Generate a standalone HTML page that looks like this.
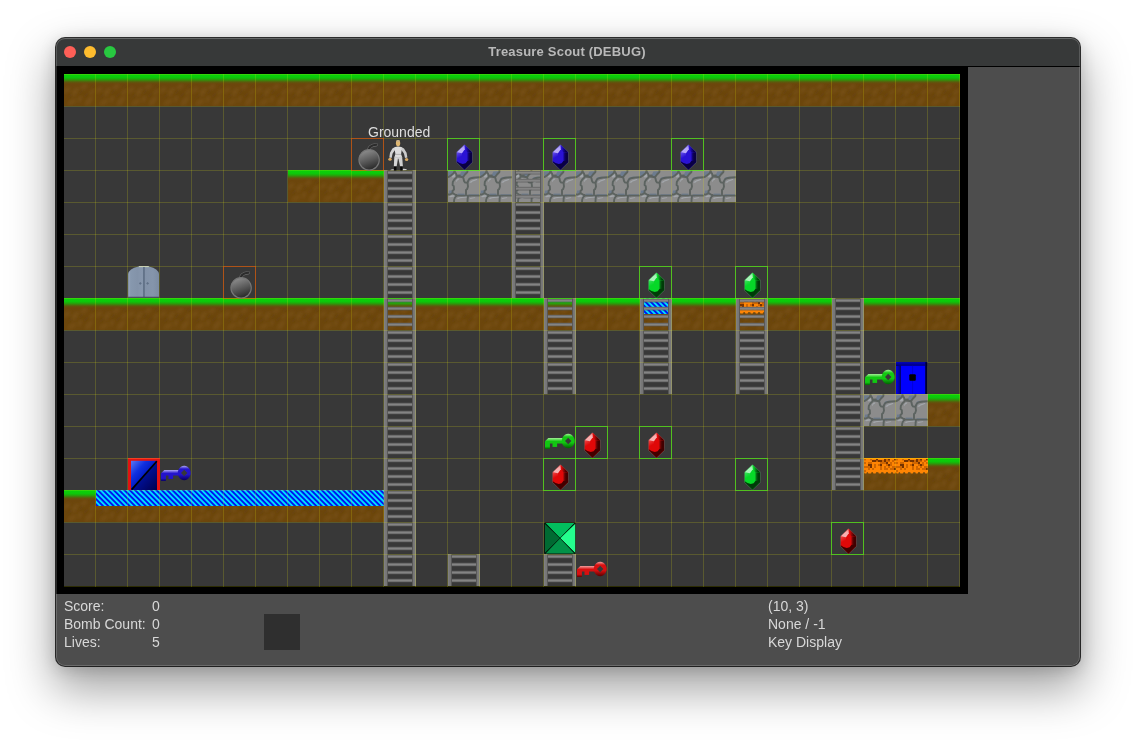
<!DOCTYPE html>
<html lang="en"><head><meta charset="utf-8"><title>Treasure Scout (DEBUG)</title>
<style>
html,body{margin:0;padding:0;}
body{width:1136px;height:740px;background:#fff;position:relative;overflow:hidden;font-family:"DejaVu Sans","Liberation Sans",sans-serif;}
#win{position:absolute;left:56px;top:38px;width:1024px;height:628px;border-radius:9px;background:#4d4d4d;
 box-shadow:0 0 0 1px rgba(0,0,0,.8),0 21px 46px 3px rgba(0,0,0,.36),0 3px 16px rgba(0,0,0,.17);overflow:hidden;}
#win:after{content:'';position:absolute;left:0;top:0;right:0;bottom:0;border-radius:9px;box-shadow:inset 0 0 0 1px rgba(255,255,255,.17),inset 0 1px 0 rgba(255,255,255,.09);pointer-events:none;}
#tb{position:absolute;left:0;top:0;width:1024px;height:28px;background:#373939;border-bottom:1px solid #000;}
#tb .t{position:absolute;left:0;right:2px;top:6px;text-align:center;font:bold 13px "Liberation Sans",sans-serif;color:#b9b9b9;letter-spacing:0.2px;will-change:transform;}
.tl{position:absolute;top:8px;width:12px;height:12px;border-radius:50%;}
#game{position:absolute;left:0;top:28px;width:912px;height:528px;background:#000;}
#game svg{position:absolute;left:0;top:0;}
.hud{position:absolute;color:#d8d8d8;font:14px/18px "Liberation Sans",sans-serif;white-space:pre;will-change:transform;}
#grounded{position:absolute;left:312px;top:57px;color:#dedede;font:14px/18px "Liberation Sans",sans-serif;will-change:transform;}
</style></head><body>
<div id="win">
 <div id="tb">
  <div class="tl" style="left:8px;background:#fe5f57"></div>
  <div class="tl" style="left:28px;background:#febc2e"></div>
  <div class="tl" style="left:48px;background:#28c840"></div>
  <div class="t">Treasure Scout (DEBUG)</div>
 </div>
 <div id="game">
  <svg width="912" height="528" viewBox="0 0 912 528">
  <defs><pattern id="dirt" width="32" height="32" patternUnits="userSpaceOnUse">
<rect width="32" height="32" fill="#6c460c"/>
<g fill="#7e561a" opacity="0.48" filter="url(#b1)">
<ellipse cx="11" cy="18" rx="5.5" ry="2.4" transform="rotate(-50 11 18)"/>
<ellipse cx="25" cy="27" rx="5.5" ry="2.4" transform="rotate(-55 25 27)"/>
<ellipse cx="3" cy="16" rx="3.4" ry="2" transform="rotate(-40 3 16)"/>
<ellipse cx="20" cy="13" rx="4" ry="2" transform="rotate(-45 20 13)"/>
<ellipse cx="28" cy="18" rx="3.4" ry="1.8" transform="rotate(-60 28 18)"/>
<ellipse cx="8" cy="28" rx="4.5" ry="2" transform="rotate(-30 8 28)"/>
<ellipse cx="16" cy="25" rx="3.4" ry="1.7" transform="rotate(-60 16 25)"/>
</g>
<g fill="#643f09" opacity="0.5" filter="url(#b1)">
<ellipse cx="17" cy="18" rx="3" ry="1.7" transform="rotate(-50 17 18)"/>
<ellipse cx="6" cy="22" rx="3" ry="1.7" transform="rotate(-50 6 22)"/>
<ellipse cx="29" cy="12" rx="3" ry="1.7" transform="rotate(-50 29 12)"/>
<ellipse cx="22" cy="21" rx="3" ry="1.5" transform="rotate(-40 22 21)"/>
</g>
</pattern>
<filter id="b1" x="-50%" y="-50%" width="200%" height="200%"><feGaussianBlur stdDeviation="1.5"/></filter>
<linearGradient id="grass" x1="0" y1="0" x2="0" y2="1">
<stop offset="0" stop-color="#09d309"/>
<stop offset="0.26" stop-color="#0bcb0a"/>
<stop offset="0.40" stop-color="#1bb00b" stop-opacity="0.97"/>
<stop offset="0.54" stop-color="#38890c" stop-opacity="0.8"/>
<stop offset="0.68" stop-color="#56620d" stop-opacity="0.45"/>
<stop offset="0.84" stop-color="#6e470d" stop-opacity="0"/>
</linearGradient><pattern id="stone" width="32" height="32" patternUnits="userSpaceOnUse">
<rect width="32" height="32" fill="#8c8c8c"/>
<g filter="url(#b05)"><g fill="#6d7b8e">
<path d="M0,1.5 L4.8,1.2 L5,3.2 L3.5,4.6 L1.5,6 L0,6.4Z"/>
<path d="M13.5,1.4 L19,1.2 L19,2.6 L17,4.6 L15.2,6.4 L12,6.2 L11.8,4.5Z"/>
<path d="M19.6,11.6 L20,9 L21.5,7.3 L26.5,6.6 L26,7.6 L23.6,8.4 L21.6,10 L21,12Z"/>
<path d="M1.2,20.4 L4.2,20.4 L4.2,23.2 L0.6,23.6Z"/>
<path d="M9.5,23.6 L16.5,23.6 L16.5,25 L9.5,25Z"/>
<path d="M20.6,24.2 L31,24.2 L31,25 L23,25 L23,26.6 L20.6,26.6Z"/>
</g>
<g fill="#a3a7ac">
<path d="M3.8,6.8 L4.6,5.2 L5.9,4.1 L7.2,4.4 L7.6,6 L6.4,7.2 L4.6,7.6Z"/>
<path d="M7.8,11.4 L8.7,9.6 L10.2,8.5 L11.4,8.5 L11,9.6 L9.6,10.3 L8.6,11.8Z"/>
<path d="M21.3,12.8 L22.7,11.2 L24.6,10.2 L27,9.5 L29.2,8.8 L29.2,9.8 L27,10.8 L24.6,11.5 L23.2,12.8Z"/>
<path d="M1,26.8 L2.6,25.6 L5,25.2 L7.4,25.6 L7.2,26.8 L5,26.8 L2.6,27.3Z"/>
<path d="M8.9,28.8 L10.2,27.6 L13,27.1 L16.5,26.7 L17.3,25.5 L19,25.7 L19,27.4 L16,27.8 L12,28.2 L10.2,29Z"/>
<path d="M21.2,28.8 L22.6,28 L25,27.4 L27.2,27.2 L27,28 L24.5,28.6 L22.6,29.1Z"/>
</g>
<g fill="none" stroke="#5c6360" stroke-width="1.9" stroke-linejoin="round" stroke-linecap="round">
<path d="M0,7.2 L1.5,6.6 L3.5,5 L5.6,3.2 L6.5,1.5 L6.5,0"/>
<path d="M6.5,1.5 L8,3.5 L8.6,5.5 L10,6.6 L12,6.8 L15,7.2 L17,4.5 L19.4,2 L19.4,0"/>
<path d="M9,6 L11.5,5.8" stroke-width="2.6"/>
<path d="M9,6.5 L8,7.8 L6.3,9.5 L4.8,12 L4.6,15 L5.8,16.2 L6,19.5 L4.6,20.8 L4.6,23 L6.5,24.3 L8.5,25.2"/>
<path d="M15,7.2 L15.5,8.5 L16,11 L17,12.6 L19.5,12.6 L19.8,15 L20,16.5 L19.2,19 L18,20 L18,24.5"/>
<path d="M19.5,12.6 L20.3,10.5 L21.5,8.8 L24,8 L27.5,7.5 L32,7.2"/>
<path d="M0,24.5 L2,24.5 L4.6,23.2"/>
<path d="M8.5,25.6 L32,25.6"/>
<path d="M8.5,25.6 L7,27.5 L6.2,29.5 L6,32"/>
<path d="M20,26 L19.6,29 L19.5,32"/>
</g></g>
</pattern>
<filter id="b05" x="-5%" y="-5%" width="110%" height="110%"><feGaussianBlur stdDeviation="0.5"/></filter><pattern id="ladder" width="32" height="8" patternUnits="userSpaceOnUse" patternTransform="translate(0,0.8)">
<rect x="3.6" y="0" width="24.8" height="3.4" fill="#505050"/>
<rect x="3.6" y="0.45" width="24.8" height="2.5" fill="#7a7a7a"/>
<rect x="3.6" y="1.0" width="24.8" height="1.3" fill="#868686"/>
<rect x="0.2" y="0" width="3.6" height="8" fill="#767676"/>
<rect x="28.2" y="0" width="3.6" height="8" fill="#767676"/>
<rect x="0.2" y="0" width="0.9" height="8" fill="#868686"/>
<rect x="30.9" y="0" width="0.9" height="8" fill="#868686"/>
<rect x="3.1" y="0" width="0.7" height="8" fill="#4e4e4e"/>
<rect x="28.2" y="0" width="0.7" height="8" fill="#4e4e4e"/>
</pattern><pattern id="water" width="16" height="16" patternUnits="userSpaceOnUse">
<rect width="16" height="16" fill="#0014f0"/>
<path d="M-18.36,0 L-15.70,0 L0.30,16 L-2.36,16Z M-13.03,0 L-10.36,0 L5.64,16 L2.97,16Z M-7.70,0 L-5.03,0 L10.97,16 L8.30,16Z M-2.36,0 L0.30,0 L16.30,16 L13.64,16Z M2.97,0 L5.64,0 L21.64,16 L18.97,16Z M8.30,0 L10.97,0 L26.97,16 L24.30,16Z M13.64,0 L16.30,0 L32.30,16 L29.64,16Z M18.97,0 L21.64,0 L37.64,16 L34.97,16Z" fill="#00dcff"/>
</pattern><pattern id="lava" width="32" height="16" patternUnits="userSpaceOnUse">
<rect width="32" height="14.2" fill="#ff8503"/>
<rect width="32" height="1" fill="#ff9c00"/>
<g fill="#ff8503"><rect x="0.2" y="13.6" width="2.6" height="2" rx="0.8"/><rect x="4.0" y="13.6" width="3.4" height="2" rx="0.8"/><rect x="9.0" y="13.6" width="3.0" height="2" rx="0.8"/><rect x="14.4" y="13.6" width="2.8" height="2" rx="0.8"/><rect x="19.4" y="13.6" width="2.6" height="2" rx="0.8"/><rect x="24.0" y="13.6" width="3.2" height="2" rx="0.8"/><rect x="28.8" y="13.6" width="2.8" height="2" rx="0.8"/></g>
<g filter="url(#b05)"><g fill="#c45e00" opacity="0.8"><rect x="0" y="1.0" width="2" height="1.4"/><rect x="6" y="1.0" width="2" height="1.4"/><rect x="22" y="1.0" width="2" height="1.4"/><rect x="12" y="2.0" width="2" height="2.0"/><rect x="18" y="2.0" width="2" height="2.0"/><rect x="22" y="2.0" width="2" height="2.0"/><rect x="24" y="2.0" width="2" height="2.0"/><rect x="28" y="2.0" width="2" height="2.0"/><rect x="0" y="4.0" width="2" height="2.0"/><rect x="4" y="4.0" width="2" height="2.0"/><rect x="6" y="4.0" width="2" height="2.0"/><rect x="16" y="4.0" width="2" height="2.0"/><rect x="18" y="4.0" width="2" height="2.0"/><rect x="20" y="4.0" width="2" height="2.0"/><rect x="26" y="4.0" width="2" height="2.0"/><rect x="30" y="4.0" width="2" height="2.0"/><rect x="10" y="6.0" width="2" height="2.0"/><rect x="14" y="6.0" width="2" height="2.0"/><rect x="22" y="6.0" width="2" height="2.0"/><rect x="26" y="6.0" width="2" height="2.0"/><rect x="0" y="8.0" width="2" height="2.0"/><rect x="2" y="8.0" width="2" height="2.0"/><rect x="4" y="8.0" width="2" height="2.0"/><rect x="10" y="8.0" width="2" height="2.0"/><rect x="16" y="8.0" width="2" height="2.0"/><rect x="20" y="8.0" width="2" height="2.0"/><rect x="24" y="8.0" width="2" height="2.0"/><rect x="28" y="8.0" width="2" height="2.0"/><rect x="30" y="8.0" width="2" height="2.0"/><rect x="4" y="10.0" width="2" height="2.0"/><rect x="8" y="10.0" width="2" height="2.0"/><rect x="16" y="10.0" width="2" height="2.0"/><rect x="20" y="10.0" width="2" height="2.0"/><rect x="22" y="10.0" width="2" height="2.0"/><rect x="26" y="10.0" width="2" height="2.0"/><rect x="28" y="10.0" width="2" height="2.0"/><rect x="0" y="12.0" width="2" height="2.0"/></g>
<g fill="#5e2400" opacity="0.85"><rect x="12" y="1.0" width="2" height="1.4"/><rect x="20" y="1.0" width="2" height="1.4"/><rect x="24" y="1.0" width="2" height="1.4"/><rect x="30" y="1.0" width="2" height="1.4"/><rect x="8" y="2.0" width="2" height="2.0"/><rect x="10" y="2.0" width="2" height="2.0"/><rect x="14" y="2.0" width="2" height="2.0"/><rect x="16" y="2.0" width="2" height="2.0"/><rect x="20" y="2.0" width="2" height="2.0"/><rect x="22" y="4.0" width="2" height="2.0"/><rect x="4" y="6.0" width="2" height="2.0"/><rect x="6" y="6.0" width="2" height="2.0"/><rect x="16" y="6.0" width="2" height="2.0"/><rect x="24" y="6.0" width="2" height="2.0"/><rect x="6" y="8.0" width="2" height="2.0"/><rect x="30" y="10.0" width="2" height="2.0"/></g></g>
</pattern><linearGradient id="bombg" x1="0.3" y1="0.02" x2="0.65" y2="0.98">
<stop offset="0" stop-color="#8e8e8e"/><stop offset="0.5" stop-color="#5c5c5c"/><stop offset="1" stop-color="#272727"/></linearGradient>
<linearGradient id="doorg" x1="0" y1="0" x2="1" y2="0">
<stop offset="0" stop-color="#9cabc0"/><stop offset="0.08" stop-color="#8798ae"/><stop offset="0.3" stop-color="#8393a9"/>
<stop offset="0.45" stop-color="#8797ad"/><stop offset="0.55" stop-color="#8292a8"/><stop offset="0.8" stop-color="#8595ab"/><stop offset="1" stop-color="#7c8ca2"/></linearGradient>
<linearGradient id="lockL" x1="0" y1="0" x2="1" y2="0"><stop offset="0" stop-color="#0000ea"/><stop offset="0.07" stop-color="#0000b8"/><stop offset="0.15" stop-color="#000070"/><stop offset="1" stop-color="#000066"/></linearGradient>
<linearGradient id="lockT" x1="0" y1="0" x2="0" y2="1"><stop offset="0" stop-color="#0000c8"/><stop offset="1" stop-color="#00006c"/></linearGradient>
<linearGradient id="lockR" x1="0" y1="0" x2="1" y2="0"><stop offset="0" stop-color="#000070"/><stop offset="1" stop-color="#000010"/></linearGradient>
<linearGradient id="crateg" x1="0" y1="0" x2="1" y2="1"><stop offset="0" stop-color="#5a78f4"/><stop offset="0.3" stop-color="#1030e0"/><stop offset="0.55" stop-color="#0018c0"/><stop offset="1" stop-color="#000058"/></linearGradient><linearGradient id="glb" x1="0" y1="0" x2="0.25" y2="1"><stop offset="0" stop-color="#6a52ea"/><stop offset="0.55" stop-color="#2a12d4"/><stop offset="1" stop-color="#2a12d4"/></linearGradient><linearGradient id="gtb" x1="0.3" y1="0" x2="0.6" y2="1"><stop offset="0" stop-color="#6a52ea"/><stop offset="0.5" stop-color="#b6a8f8"/><stop offset="1" stop-color="#b6a8f8"/></linearGradient><linearGradient id="grb" gradientUnits="userSpaceOnUse" x1="17.6" y1="0" x2="22" y2="0"><stop offset="0" stop-color="#2a12d4"/><stop offset="0.4" stop-color="#16059a"/><stop offset="1" stop-color="#0a0044"/></linearGradient><linearGradient id="glg" x1="0" y1="0" x2="0.25" y2="1"><stop offset="0" stop-color="#3ee060"/><stop offset="0.55" stop-color="#06d828"/><stop offset="1" stop-color="#06d828"/></linearGradient><linearGradient id="gtg" x1="0.3" y1="0" x2="0.6" y2="1"><stop offset="0" stop-color="#3ee060"/><stop offset="0.5" stop-color="#a8f4b8"/><stop offset="1" stop-color="#a8f4b8"/></linearGradient><linearGradient id="grg" gradientUnits="userSpaceOnUse" x1="17.6" y1="0" x2="22" y2="0"><stop offset="0" stop-color="#06d828"/><stop offset="0.4" stop-color="#068c1a"/><stop offset="1" stop-color="#003c08"/></linearGradient><linearGradient id="glr" x1="0" y1="0" x2="0.25" y2="1"><stop offset="0" stop-color="#ee4848"/><stop offset="0.55" stop-color="#e00808"/><stop offset="1" stop-color="#e00808"/></linearGradient><linearGradient id="gtr" x1="0.3" y1="0" x2="0.6" y2="1"><stop offset="0" stop-color="#ee4848"/><stop offset="0.5" stop-color="#f8b0b0"/><stop offset="1" stop-color="#f8b0b0"/></linearGradient><linearGradient id="grr" gradientUnits="userSpaceOnUse" x1="17.6" y1="0" x2="22" y2="0"><stop offset="0" stop-color="#e00808"/><stop offset="0.4" stop-color="#960808"/><stop offset="1" stop-color="#420000"/></linearGradient><linearGradient id="kgg" x1="0" y1="0" x2="0" y2="1"><stop offset="0" stop-color="#a4f096"/><stop offset="0.22" stop-color="#12c812"/><stop offset="0.6" stop-color="#12c812"/><stop offset="1" stop-color="#006400"/></linearGradient><linearGradient id="ksg" x1="0" y1="0" x2="0" y2="1"><stop offset="0" stop-color="#a4f096"/><stop offset="0.3" stop-color="#12c812"/><stop offset="0.75" stop-color="#12c812"/><stop offset="1" stop-color="#006400"/></linearGradient><linearGradient id="kgb" x1="0" y1="0" x2="0" y2="1"><stop offset="0" stop-color="#b0a8f4"/><stop offset="0.22" stop-color="#2414cc"/><stop offset="0.6" stop-color="#2414cc"/><stop offset="1" stop-color="#08005a"/></linearGradient><linearGradient id="ksb" x1="0" y1="0" x2="0" y2="1"><stop offset="0" stop-color="#b0a8f4"/><stop offset="0.3" stop-color="#2414cc"/><stop offset="0.75" stop-color="#2414cc"/><stop offset="1" stop-color="#08005a"/></linearGradient><linearGradient id="kgr" x1="0" y1="0" x2="0" y2="1"><stop offset="0" stop-color="#f4a0a0"/><stop offset="0.22" stop-color="#d81010"/><stop offset="0.6" stop-color="#d81010"/><stop offset="1" stop-color="#5a0000"/></linearGradient><linearGradient id="ksr" x1="0" y1="0" x2="0" y2="1"><stop offset="0" stop-color="#f4a0a0"/><stop offset="0.3" stop-color="#d81010"/><stop offset="0.75" stop-color="#d81010"/><stop offset="1" stop-color="#5a0000"/></linearGradient></defs>
  <g transform="translate(8,8)"><rect x="0" y="0" width="896" height="512" fill="#383838"/><rect x="0" y="0" width="896" height="32" fill="url(#dirt)"/><rect x="0" y="0" width="896" height="12.6" fill="url(#grass)"/><rect x="224" y="96" width="96" height="32" fill="url(#dirt)"/><rect x="224" y="96" width="96" height="12.6" fill="url(#grass)"/><rect x="384" y="96" width="288" height="32" fill="url(#stone)"/><rect x="0" y="224" width="768" height="32" fill="url(#dirt)"/><rect x="0" y="224" width="768" height="12.6" fill="url(#grass)"/><rect x="800" y="224" width="96" height="32" fill="url(#dirt)"/><rect x="800" y="224" width="96" height="12.6" fill="url(#grass)"/><rect x="800" y="320" width="64" height="32" fill="url(#stone)"/><rect x="864" y="320" width="32" height="32" fill="url(#dirt)"/><rect x="864" y="320" width="32" height="12.6" fill="url(#grass)"/><rect x="800" y="384" width="64" height="32" fill="url(#dirt)"/><rect x="864" y="384" width="32" height="32" fill="url(#dirt)"/><rect x="864" y="384" width="32" height="12.6" fill="url(#grass)"/><rect x="0" y="416" width="32" height="32" fill="url(#dirt)"/><rect x="0" y="416" width="32" height="12.6" fill="url(#grass)"/><rect x="32" y="416" width="288" height="32" fill="url(#dirt)"/><rect x="576" y="224" width="32" height="16" fill="url(#water)"/><rect x="32" y="416" width="288" height="16" fill="url(#water)"/><rect x="672" y="224" width="32" height="16" fill="url(#lava)"/><rect x="800" y="384" width="64" height="16" fill="url(#lava)"/><rect x="320" y="96" width="32" height="416" fill="url(#ladder)"/><rect x="448" y="96" width="32" height="128" fill="url(#ladder)"/><rect x="480" y="224" width="32" height="96" fill="url(#ladder)"/><rect x="576" y="224" width="32" height="96" fill="url(#ladder)"/><rect x="672" y="224" width="32" height="96" fill="url(#ladder)"/><rect x="768" y="224" width="32" height="192" fill="url(#ladder)"/><rect x="384" y="480" width="32" height="32" fill="url(#ladder)"/><rect x="480" y="480" width="32" height="32" fill="url(#ladder)"/><g fill="#e8ec12" fill-opacity="0.19"><rect x="31" y="0" width="1" height="513"/><rect x="63" y="0" width="1" height="513"/><rect x="95" y="0" width="1" height="513"/><rect x="127" y="0" width="1" height="513"/><rect x="159" y="0" width="1" height="513"/><rect x="191" y="0" width="1" height="513"/><rect x="223" y="0" width="1" height="513"/><rect x="255" y="0" width="1" height="513"/><rect x="287" y="0" width="1" height="513"/><rect x="319" y="0" width="1" height="513"/><rect x="351" y="0" width="1" height="513"/><rect x="383" y="0" width="1" height="513"/><rect x="415" y="0" width="1" height="513"/><rect x="447" y="0" width="1" height="513"/><rect x="479" y="0" width="1" height="513"/><rect x="511" y="0" width="1" height="513"/><rect x="543" y="0" width="1" height="513"/><rect x="575" y="0" width="1" height="513"/><rect x="607" y="0" width="1" height="513"/><rect x="639" y="0" width="1" height="513"/><rect x="671" y="0" width="1" height="513"/><rect x="703" y="0" width="1" height="513"/><rect x="735" y="0" width="1" height="513"/><rect x="767" y="0" width="1" height="513"/><rect x="799" y="0" width="1" height="513"/><rect x="831" y="0" width="1" height="513"/><rect x="863" y="0" width="1" height="513"/><rect x="895" y="0" width="1" height="513"/><rect x="0" y="0" width="896" height="1"/><rect x="0" y="32" width="896" height="1"/><rect x="0" y="64" width="896" height="1"/><rect x="0" y="96" width="896" height="1"/><rect x="0" y="128" width="896" height="1"/><rect x="0" y="160" width="896" height="1"/><rect x="0" y="192" width="896" height="1"/><rect x="0" y="224" width="896" height="1"/><rect x="0" y="256" width="896" height="1"/><rect x="0" y="288" width="896" height="1"/><rect x="0" y="320" width="896" height="1"/><rect x="0" y="352" width="896" height="1"/><rect x="0" y="384" width="896" height="1"/><rect x="0" y="416" width="896" height="1"/><rect x="0" y="448" width="896" height="1"/><rect x="0" y="480" width="896" height="1"/><rect x="0" y="512" width="896" height="1"/></g><rect x="383.5" y="64.5" width="32" height="32" fill="none" stroke="rgba(80,236,24,0.7)" stroke-width="1"/><g transform="translate(384,64)"><g><polygon points="16.5,6.2 24.7,14.1 24.7,24.4 16.5,32.3 8.2,24.4 8.2,14.1" fill="#7c8484" fill-opacity="0.4"/><polygon points="16.5,6.8 24.1,14.3 24.1,24.2 16.5,31.8 8.8,24.2 8.8,14.3" fill="#2a12d4"/><polygon points="16.5,6.8 24.1,14.3 19.4,14.6 16.8,11" fill="url(#grb)"/><polygon points="24.1,14.3 19.4,14.6 19.4,25 24.1,24.2" fill="url(#grb)"/><polygon points="8.8,14.3 14,14.6 14,25.6 8.8,24.2" fill="url(#glb)"/><polygon points="16.5,6.8 8.8,14.3 14,15.2 16.8,11.2" fill="url(#gtb)"/><polygon points="8.8,23.2 11.5,25 14.8,26 17.6,25.2 19.4,23 24.1,22.4 24.1,24.2 16.5,31.8 8.8,24.2" fill="#0a0044"/></g></g><rect x="479.5" y="64.5" width="32" height="32" fill="none" stroke="rgba(80,236,24,0.7)" stroke-width="1"/><g transform="translate(480,64)"><g><polygon points="16.5,6.2 24.7,14.1 24.7,24.4 16.5,32.3 8.2,24.4 8.2,14.1" fill="#7c8484" fill-opacity="0.4"/><polygon points="16.5,6.8 24.1,14.3 24.1,24.2 16.5,31.8 8.8,24.2 8.8,14.3" fill="#2a12d4"/><polygon points="16.5,6.8 24.1,14.3 19.4,14.6 16.8,11" fill="url(#grb)"/><polygon points="24.1,14.3 19.4,14.6 19.4,25 24.1,24.2" fill="url(#grb)"/><polygon points="8.8,14.3 14,14.6 14,25.6 8.8,24.2" fill="url(#glb)"/><polygon points="16.5,6.8 8.8,14.3 14,15.2 16.8,11.2" fill="url(#gtb)"/><polygon points="8.8,23.2 11.5,25 14.8,26 17.6,25.2 19.4,23 24.1,22.4 24.1,24.2 16.5,31.8 8.8,24.2" fill="#0a0044"/></g></g><rect x="607.5" y="64.5" width="32" height="32" fill="none" stroke="rgba(80,236,24,0.7)" stroke-width="1"/><g transform="translate(608,64)"><g><polygon points="16.5,6.2 24.7,14.1 24.7,24.4 16.5,32.3 8.2,24.4 8.2,14.1" fill="#7c8484" fill-opacity="0.4"/><polygon points="16.5,6.8 24.1,14.3 24.1,24.2 16.5,31.8 8.8,24.2 8.8,14.3" fill="#2a12d4"/><polygon points="16.5,6.8 24.1,14.3 19.4,14.6 16.8,11" fill="url(#grb)"/><polygon points="24.1,14.3 19.4,14.6 19.4,25 24.1,24.2" fill="url(#grb)"/><polygon points="8.8,14.3 14,14.6 14,25.6 8.8,24.2" fill="url(#glb)"/><polygon points="16.5,6.8 8.8,14.3 14,15.2 16.8,11.2" fill="url(#gtb)"/><polygon points="8.8,23.2 11.5,25 14.8,26 17.6,25.2 19.4,23 24.1,22.4 24.1,24.2 16.5,31.8 8.8,24.2" fill="#0a0044"/></g></g><rect x="575.5" y="192.5" width="32" height="32" fill="none" stroke="rgba(80,236,24,0.7)" stroke-width="1"/><g transform="translate(576,192)"><g><polygon points="16.5,6.2 24.7,14.1 24.7,24.4 16.5,32.3 8.2,24.4 8.2,14.1" fill="#7c8484" fill-opacity="0.4"/><polygon points="16.5,6.8 24.1,14.3 24.1,24.2 16.5,31.8 8.8,24.2 8.8,14.3" fill="#06d828"/><polygon points="16.5,6.8 24.1,14.3 19.4,14.6 16.8,11" fill="url(#grg)"/><polygon points="24.1,14.3 19.4,14.6 19.4,25 24.1,24.2" fill="url(#grg)"/><polygon points="8.8,14.3 14,14.6 14,25.6 8.8,24.2" fill="url(#glg)"/><polygon points="16.5,6.8 8.8,14.3 14,15.2 16.8,11.2" fill="url(#gtg)"/><polygon points="8.8,23.2 11.5,25 14.8,26 17.6,25.2 19.4,23 24.1,22.4 24.1,24.2 16.5,31.8 8.8,24.2" fill="#003c08"/></g></g><rect x="671.5" y="192.5" width="32" height="32" fill="none" stroke="rgba(80,236,24,0.7)" stroke-width="1"/><g transform="translate(672,192)"><g><polygon points="16.5,6.2 24.7,14.1 24.7,24.4 16.5,32.3 8.2,24.4 8.2,14.1" fill="#7c8484" fill-opacity="0.4"/><polygon points="16.5,6.8 24.1,14.3 24.1,24.2 16.5,31.8 8.8,24.2 8.8,14.3" fill="#06d828"/><polygon points="16.5,6.8 24.1,14.3 19.4,14.6 16.8,11" fill="url(#grg)"/><polygon points="24.1,14.3 19.4,14.6 19.4,25 24.1,24.2" fill="url(#grg)"/><polygon points="8.8,14.3 14,14.6 14,25.6 8.8,24.2" fill="url(#glg)"/><polygon points="16.5,6.8 8.8,14.3 14,15.2 16.8,11.2" fill="url(#gtg)"/><polygon points="8.8,23.2 11.5,25 14.8,26 17.6,25.2 19.4,23 24.1,22.4 24.1,24.2 16.5,31.8 8.8,24.2" fill="#003c08"/></g></g><rect x="671.5" y="384.5" width="32" height="32" fill="none" stroke="rgba(80,236,24,0.7)" stroke-width="1"/><g transform="translate(672,384)"><g><polygon points="16.5,6.2 24.7,14.1 24.7,24.4 16.5,32.3 8.2,24.4 8.2,14.1" fill="#7c8484" fill-opacity="0.4"/><polygon points="16.5,6.8 24.1,14.3 24.1,24.2 16.5,31.8 8.8,24.2 8.8,14.3" fill="#06d828"/><polygon points="16.5,6.8 24.1,14.3 19.4,14.6 16.8,11" fill="url(#grg)"/><polygon points="24.1,14.3 19.4,14.6 19.4,25 24.1,24.2" fill="url(#grg)"/><polygon points="8.8,14.3 14,14.6 14,25.6 8.8,24.2" fill="url(#glg)"/><polygon points="16.5,6.8 8.8,14.3 14,15.2 16.8,11.2" fill="url(#gtg)"/><polygon points="8.8,23.2 11.5,25 14.8,26 17.6,25.2 19.4,23 24.1,22.4 24.1,24.2 16.5,31.8 8.8,24.2" fill="#003c08"/></g></g><rect x="511.5" y="352.5" width="32" height="32" fill="none" stroke="rgba(80,236,24,0.7)" stroke-width="1"/><g transform="translate(512,352)"><g><polygon points="16.5,6.2 24.7,14.1 24.7,24.4 16.5,32.3 8.2,24.4 8.2,14.1" fill="#7c8484" fill-opacity="0.4"/><polygon points="16.5,6.8 24.1,14.3 24.1,24.2 16.5,31.8 8.8,24.2 8.8,14.3" fill="#e00808"/><polygon points="16.5,6.8 24.1,14.3 19.4,14.6 16.8,11" fill="url(#grr)"/><polygon points="24.1,14.3 19.4,14.6 19.4,25 24.1,24.2" fill="url(#grr)"/><polygon points="8.8,14.3 14,14.6 14,25.6 8.8,24.2" fill="url(#glr)"/><polygon points="16.5,6.8 8.8,14.3 14,15.2 16.8,11.2" fill="url(#gtr)"/><polygon points="8.8,23.2 11.5,25 14.8,26 17.6,25.2 19.4,23 24.1,22.4 24.1,24.2 16.5,31.8 8.8,24.2" fill="#420000"/></g></g><rect x="575.5" y="352.5" width="32" height="32" fill="none" stroke="rgba(80,236,24,0.7)" stroke-width="1"/><g transform="translate(576,352)"><g><polygon points="16.5,6.2 24.7,14.1 24.7,24.4 16.5,32.3 8.2,24.4 8.2,14.1" fill="#7c8484" fill-opacity="0.4"/><polygon points="16.5,6.8 24.1,14.3 24.1,24.2 16.5,31.8 8.8,24.2 8.8,14.3" fill="#e00808"/><polygon points="16.5,6.8 24.1,14.3 19.4,14.6 16.8,11" fill="url(#grr)"/><polygon points="24.1,14.3 19.4,14.6 19.4,25 24.1,24.2" fill="url(#grr)"/><polygon points="8.8,14.3 14,14.6 14,25.6 8.8,24.2" fill="url(#glr)"/><polygon points="16.5,6.8 8.8,14.3 14,15.2 16.8,11.2" fill="url(#gtr)"/><polygon points="8.8,23.2 11.5,25 14.8,26 17.6,25.2 19.4,23 24.1,22.4 24.1,24.2 16.5,31.8 8.8,24.2" fill="#420000"/></g></g><rect x="479.5" y="384.5" width="32" height="32" fill="none" stroke="rgba(80,236,24,0.7)" stroke-width="1"/><g transform="translate(480,384)"><g><polygon points="16.5,6.2 24.7,14.1 24.7,24.4 16.5,32.3 8.2,24.4 8.2,14.1" fill="#7c8484" fill-opacity="0.4"/><polygon points="16.5,6.8 24.1,14.3 24.1,24.2 16.5,31.8 8.8,24.2 8.8,14.3" fill="#e00808"/><polygon points="16.5,6.8 24.1,14.3 19.4,14.6 16.8,11" fill="url(#grr)"/><polygon points="24.1,14.3 19.4,14.6 19.4,25 24.1,24.2" fill="url(#grr)"/><polygon points="8.8,14.3 14,14.6 14,25.6 8.8,24.2" fill="url(#glr)"/><polygon points="16.5,6.8 8.8,14.3 14,15.2 16.8,11.2" fill="url(#gtr)"/><polygon points="8.8,23.2 11.5,25 14.8,26 17.6,25.2 19.4,23 24.1,22.4 24.1,24.2 16.5,31.8 8.8,24.2" fill="#420000"/></g></g><rect x="767.5" y="448.5" width="32" height="32" fill="none" stroke="rgba(80,236,24,0.7)" stroke-width="1"/><g transform="translate(768,448)"><g><polygon points="16.5,6.2 24.7,14.1 24.7,24.4 16.5,32.3 8.2,24.4 8.2,14.1" fill="#7c8484" fill-opacity="0.4"/><polygon points="16.5,6.8 24.1,14.3 24.1,24.2 16.5,31.8 8.8,24.2 8.8,14.3" fill="#e00808"/><polygon points="16.5,6.8 24.1,14.3 19.4,14.6 16.8,11" fill="url(#grr)"/><polygon points="24.1,14.3 19.4,14.6 19.4,25 24.1,24.2" fill="url(#grr)"/><polygon points="8.8,14.3 14,14.6 14,25.6 8.8,24.2" fill="url(#glr)"/><polygon points="16.5,6.8 8.8,14.3 14,15.2 16.8,11.2" fill="url(#gtr)"/><polygon points="8.8,23.2 11.5,25 14.8,26 17.6,25.2 19.4,23 24.1,22.4 24.1,24.2 16.5,31.8 8.8,24.2" fill="#420000"/></g></g><rect x="287.5" y="64.5" width="32" height="32" fill="none" stroke="rgba(255,78,0,0.52)" stroke-width="1"/><g transform="translate(288,64)"><g><path d="M16.8,13.4 C16.3,8.6 19.4,7.3 24.3,6.7" fill="none" stroke="#686868" stroke-width="3.5" stroke-linecap="round"/><path d="M16.8,13.4 C16.3,8.6 19.4,7.3 24.3,6.7" fill="none" stroke="#2c2c2c" stroke-width="2.3" stroke-linecap="round"/><circle cx="17.1" cy="21.8" r="10.2" fill="url(#bombg)" stroke="#767676" stroke-width="1.1"/></g></g><rect x="159.5" y="192.5" width="32" height="32" fill="none" stroke="rgba(255,78,0,0.52)" stroke-width="1"/><g transform="translate(160,192)"><g><path d="M16.8,13.4 C16.3,8.6 19.4,7.3 24.3,6.7" fill="none" stroke="#686868" stroke-width="3.5" stroke-linecap="round"/><path d="M16.8,13.4 C16.3,8.6 19.4,7.3 24.3,6.7" fill="none" stroke="#2c2c2c" stroke-width="2.3" stroke-linecap="round"/><circle cx="17.1" cy="21.8" r="10.2" fill="url(#bombg)" stroke="#767676" stroke-width="1.1"/></g></g><g transform="translate(320,64)"><g><path d="M6.4,32 Q7,31 9.9,31.2 L9.9,32.3 L6.4,32.3Z" fill="#d4d4d4"/><path d="M18.6,30.7 Q21.8,30.4 22.8,31.6 L22.8,32 L18.6,32.2Z" fill="#d4d4d4"/><path d="M10,27.8 L12.5,27.8 L12.4,32.4 L9.9,32.4Z" fill="#080808"/><path d="M16.1,27.8 L18.5,27.8 L18.6,32.4 L16.3,32.4Z" fill="#080808"/><path d="M10.3,19.3 L14,20.3 L12.7,28.2 L9.8,28.2Z" fill="#d6d6d6"/><path d="M18.2,19.3 L14.4,20.3 L16,28.2 L18.9,28.2Z" fill="#d0d0d0"/><path d="M10.6,9.2 L11.6,11.2 L8.6,15.6 L7.6,20 L5.3,19.6 L6,14.8 L8.4,10.4Z" fill="#d2d2d2"/><path d="M17.8,9.2 L16.8,11.2 L19.9,15.6 L21,20 L23.4,19.6 L22.6,14.8 L20,10.4Z" fill="#cacaca"/><path d="M10.4,9.3 Q14.2,7.6 18,9.3 L17.1,16.3 L18.3,19.6 L14.2,20.8 L10.2,19.6 L11.4,16.3Z" fill="#dcdcdc"/><path d="M11.4,16.4 L17.1,16.4" stroke="#9c9c9c" stroke-width="0.7"/><path d="M11.2,19 Q14.2,20.6 17.3,19" stroke="#b8b8b8" stroke-width="0.6" fill="none"/><ellipse cx="6" cy="21.3" rx="1.7" ry="1.5" fill="#d6a862"/><ellipse cx="22.6" cy="21.5" rx="1.7" ry="1.5" fill="#d6a862"/><ellipse cx="14.05" cy="5.2" rx="2.15" ry="3.1" fill="#deb670"/><ellipse cx="14.05" cy="3" rx="1.7" ry="0.9" fill="#c8b08c"/></g></g><g transform="translate(64,192)"><g><path d="M0.2,31.4 L0.2,8 Q0.8,2.6 10.5,0.4 L21,0.4 Q30.4,2.6 31,8 L31,31.4Z" fill="url(#doorg)"/><rect x="10.8" y="0.2" width="10" height="0.9" fill="#dfe6c4"/><rect x="15.1" y="1" width="1.7" height="30.4" fill="#5f6f86"/><path d="M12.3,16.1 v2.6 M11,17.4 h2.6 M19.6,16.1 v2.6 M18.3,17.4 h2.6" stroke="#5f6f86" stroke-width="0.9"/><rect x="0.2" y="30.8" width="30.8" height="0.7" fill="#3c3850"/></g></g><g transform="translate(832,288)"><g><rect x="0" y="0.2" width="31.2" height="31.8" fill="url(#lockL)"/><rect x="0" y="0.2" width="31.2" height="3.8" fill="url(#lockT)"/><rect x="29" y="0.2" width="2.2" height="31.8" fill="url(#lockR)"/><rect x="5" y="3.8" width="24" height="28.2" fill="#0000fe"/><rect x="16.2" y="3.8" width="0.9" height="28.2" fill="#0000d4"/><rect x="13.3" y="12.2" width="6.5" height="6.5" rx="1" fill="#000"/></g></g><g transform="translate(64,384)"><g><rect x="0" y="0" width="32" height="32" fill="#e21212"/><rect x="0" y="0" width="32" height="1" fill="#f04020"/><rect x="3" y="2.8" width="26" height="29.2" fill="url(#crateg)"/><polygon points="29,2.8 29,32 3.6,32" fill="#000040" fill-opacity="0.38"/><path d="M3.6,31.6 L28.8,3.2" stroke="#000" stroke-width="1.7"/></g></g><g transform="translate(480,448)"><g><rect x="0.2" y="0.6" width="31.4" height="31.2" rx="1.2" fill="#000"/><polygon points="1.6,1 30.4,1 16,16" fill="#02be5e"/><polygon points="0.8,1.8 0.8,31 16,16" fill="#006a32"/><polygon points="31.2,1.8 31.2,31 16,16" fill="#24fe8e"/><polygon points="1.6,31.6 30.4,31.6 16,16" fill="#029248"/><path d="M0.6,0.8 L31.4,31.6 M31.4,0.8 L0.6,31.6" stroke="#00280f" stroke-width="0.8"/></g></g><g transform="translate(800,288)"><g><path d="M1,15.3 L4.3,12 L19,12 L19,17.5 L13.1,17.5 L13.1,21 L8.5,21 L8.5,17.5 L5.9,17.5 L5.9,23.1 L1,23.1Z" fill="url(#ksg)"/><path fill-rule="evenodd" d="M24.2,7.8 a6.5,7.2 0 1,0 0.01,0Z M24.2,11.7 L27.4,15 L24.2,18.3 L21,15Z" fill="url(#kgg)"/></g></g><g transform="translate(480,352)"><g><path d="M1,15.3 L4.3,12 L19,12 L19,17.5 L13.1,17.5 L13.1,21 L8.5,21 L8.5,17.5 L5.9,17.5 L5.9,23.1 L1,23.1Z" fill="url(#ksg)"/><path fill-rule="evenodd" d="M24.2,7.8 a6.5,7.2 0 1,0 0.01,0Z M24.2,11.7 L27.4,15 L24.2,18.3 L21,15Z" fill="url(#kgg)"/></g></g><g transform="translate(96,384)"><g><path d="M1,15.3 L4.3,12 L19,12 L19,17.5 L13.1,17.5 L13.1,21 L8.5,21 L8.5,17.5 L5.9,17.5 L5.9,23.1 L1,23.1Z" fill="url(#ksb)"/><path fill-rule="evenodd" d="M24.2,7.8 a6.5,7.2 0 1,0 0.01,0Z M24.2,11.7 L27.4,15 L24.2,18.3 L21,15Z" fill="url(#kgb)"/></g></g><g transform="translate(512,480)"><g><path d="M1,15.3 L4.3,12 L19,12 L19,17.5 L13.1,17.5 L13.1,21 L8.5,21 L8.5,17.5 L5.9,17.5 L5.9,23.1 L1,23.1Z" fill="url(#ksr)"/><path fill-rule="evenodd" d="M24.2,7.8 a6.5,7.2 0 1,0 0.01,0Z M24.2,11.7 L27.4,15 L24.2,18.3 L21,15Z" fill="url(#kgr)"/></g></g></g>
  </svg>
  <div id="grounded">Grounded</div>
 </div>
 <div class="hud" style="left:8px;top:559px;">Score:</div>
 <div class="hud" style="left:8px;top:577px;">Bomb Count:</div>
 <div class="hud" style="left:8px;top:595px;">Lives:</div>
 <div class="hud" style="left:96px;top:559px;">0</div>
 <div class="hud" style="left:96px;top:577px;">0</div>
 <div class="hud" style="left:96px;top:595px;">5</div>
 <div style="position:absolute;left:208px;top:576px;width:36px;height:36px;background:#2f2f2f;"></div>
 <div class="hud" style="left:712px;top:559px;">(10, 3)</div>
 <div class="hud" style="left:712px;top:577px;">None / -1</div>
 <div class="hud" style="left:712px;top:595px;">Key Display</div>
</div>
</body></html>
